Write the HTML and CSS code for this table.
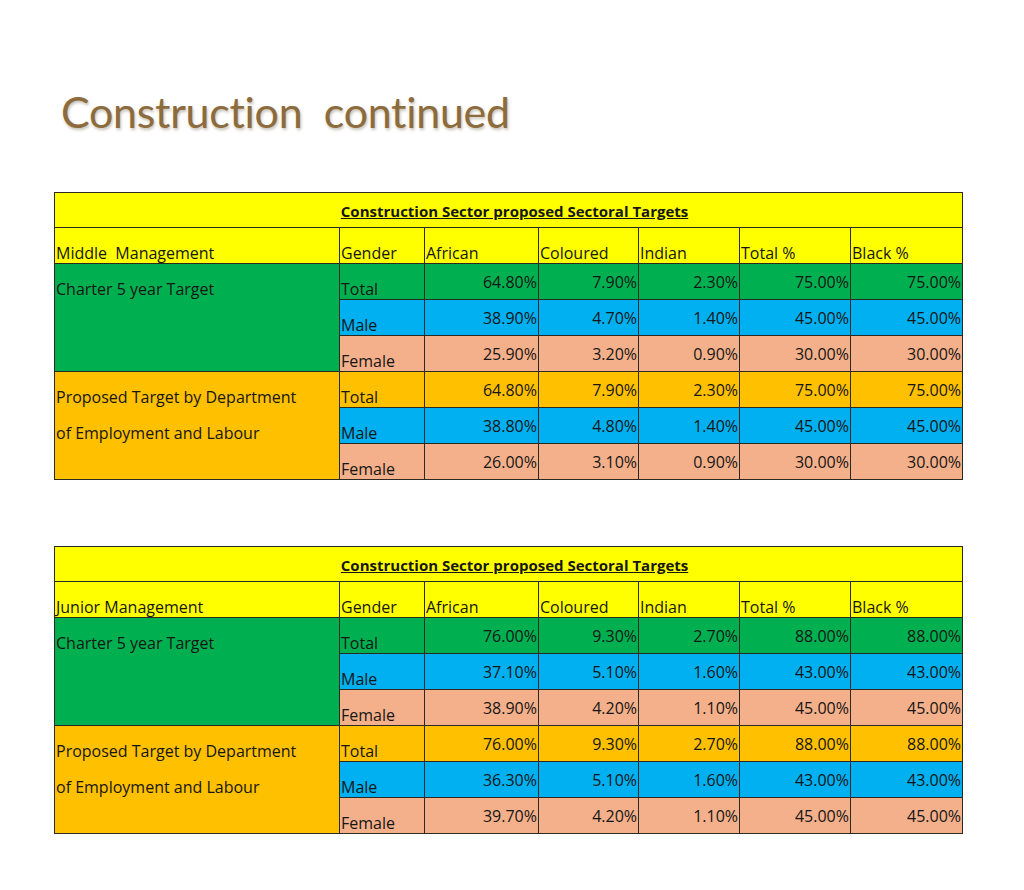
FILE: index.html
```html
<!DOCTYPE html>
<html lang="en">
<head>
<meta charset="utf-8">
<title>Construction continued</title>
<link rel="stylesheet" href="styles.css">
</head>
<body>
<div class="slide">
  <h1 class="title">Construction&nbsp; continued</h1>
  <div class="tables">
    <table class="targets">
      <colgroup>
        <col class="c-label"><col class="c-gender"><col class="c-african"><col class="c-coloured"><col class="c-indian"><col class="c-total"><col class="c-black">
      </colgroup>
      <tr class="r-title"><td colspan="7" class="caption">Construction Sector proposed Sectoral Targets</td></tr>
      <tr class="r-head">
        <td class="txt">Middle&nbsp; Management</td><td class="txt">Gender</td><td class="txt">African</td><td class="txt">Coloured</td><td class="txt">Indian</td><td class="txt">Total %</td><td class="txt">Black %</td>
      </tr>
      <tr class="green">
        <td rowspan="3" class="label">Charter 5 year Target</td>
        <td class="txt">Total</td><td class="num">64.80%</td><td class="num">7.90%</td><td class="num">2.30%</td><td class="num">75.00%</td><td class="num">75.00%</td>
      </tr>
      <tr class="blue"><td class="txt">Male</td><td class="num">38.90%</td><td class="num">4.70%</td><td class="num">1.40%</td><td class="num">45.00%</td><td class="num">45.00%</td></tr>
      <tr class="salmon"><td class="txt">Female</td><td class="num">25.90%</td><td class="num">3.20%</td><td class="num">0.90%</td><td class="num">30.00%</td><td class="num">30.00%</td></tr>
      <tr class="orange">
        <td rowspan="3" class="label">Proposed Target by Department<br>of Employment and Labour</td>
        <td class="txt">Total</td><td class="num">64.80%</td><td class="num">7.90%</td><td class="num">2.30%</td><td class="num">75.00%</td><td class="num">75.00%</td>
      </tr>
      <tr class="blue"><td class="txt">Male</td><td class="num">38.80%</td><td class="num">4.80%</td><td class="num">1.40%</td><td class="num">45.00%</td><td class="num">45.00%</td></tr>
      <tr class="salmon"><td class="txt">Female</td><td class="num">26.00%</td><td class="num">3.10%</td><td class="num">0.90%</td><td class="num">30.00%</td><td class="num">30.00%</td></tr>
    </table>

    <table class="targets">
      <colgroup>
        <col class="c-label"><col class="c-gender"><col class="c-african"><col class="c-coloured"><col class="c-indian"><col class="c-total"><col class="c-black">
      </colgroup>
      <tr class="r-title"><td colspan="7" class="caption">Construction Sector proposed Sectoral Targets</td></tr>
      <tr class="r-head">
        <td class="txt">Junior Management</td><td class="txt">Gender</td><td class="txt">African</td><td class="txt">Coloured</td><td class="txt">Indian</td><td class="txt">Total %</td><td class="txt">Black %</td>
      </tr>
      <tr class="green">
        <td rowspan="3" class="label">Charter 5 year Target</td>
        <td class="txt">Total</td><td class="num">76.00%</td><td class="num">9.30%</td><td class="num">2.70%</td><td class="num">88.00%</td><td class="num">88.00%</td>
      </tr>
      <tr class="blue"><td class="txt">Male</td><td class="num">37.10%</td><td class="num">5.10%</td><td class="num">1.60%</td><td class="num">43.00%</td><td class="num">43.00%</td></tr>
      <tr class="salmon"><td class="txt">Female</td><td class="num">38.90%</td><td class="num">4.20%</td><td class="num">1.10%</td><td class="num">45.00%</td><td class="num">45.00%</td></tr>
      <tr class="orange">
        <td rowspan="3" class="label">Proposed Target by Department<br>of Employment and Labour</td>
        <td class="txt">Total</td><td class="num">76.00%</td><td class="num">9.30%</td><td class="num">2.70%</td><td class="num">88.00%</td><td class="num">88.00%</td>
      </tr>
      <tr class="blue"><td class="txt">Male</td><td class="num">36.30%</td><td class="num">5.10%</td><td class="num">1.60%</td><td class="num">43.00%</td><td class="num">43.00%</td></tr>
      <tr class="salmon"><td class="txt">Female</td><td class="num">39.70%</td><td class="num">4.20%</td><td class="num">1.10%</td><td class="num">45.00%</td><td class="num">45.00%</td></tr>
    </table>
  </div>
</div>
</body>
</html>
```

FILE: styles.css
```css
html, body {
  margin: 0;
  padding: 0;
  background: #ffffff;
}

.slide {
  width: 1024px;
  height: 890px;
  display: flex;
  flex-direction: column;
  padding-top: 84px;
  box-sizing: border-box;
}

.title {
  margin: 0 0 0 61px;
  font-family: "Lato", "DejaVu Sans", sans-serif;
  font-weight: 400;
  font-size: 43px;
  line-height: 56px;
  color: #8c6b3c;
  text-shadow: 1px 2px 3px rgba(90, 70, 40, 0.35);
  letter-spacing: -0.3px;
}

.tables {
  margin: 52px 0 0 54px;
  display: flex;
  flex-direction: column;
  gap: 66px;
}

.targets {
  border-collapse: collapse;
  table-layout: fixed;
  width: 908px;
  font-family: "Open Sans", "Liberation Sans", sans-serif;
  font-size: 16px;
  color: #161616;
}

.c-label { width: 285px; }
.c-gender { width: 85px; }
.c-african { width: 114px; }
.c-coloured { width: 100px; }
.c-indian { width: 101px; }
.c-total { width: 111px; }
.c-black { width: 112px; }

.targets td {
  border: 1px solid #2a2a22;
  padding: 0 1px;
  height: 36px;
  box-sizing: border-box;
  white-space: nowrap;
  overflow: hidden;
}

.targets .r-title td { height: 35px; }

.targets .caption {
  background: #ffff00;
  text-align: center;
  font-weight: 700;
  font-size: 15px;
  text-decoration: underline;
  vertical-align: middle;
  padding: 1px 0 0 12px;
}

.r-head td { background: #ffff00; }

.targets .txt {
  vertical-align: bottom;
  text-align: left;
  line-height: 20px;
  padding: 0 1px 0 1px;
}

.targets .num {
  vertical-align: middle;
  text-align: right;
  padding: 0 1px 0 0;
}

.targets .label {
  vertical-align: top;
  line-height: 36px;
  padding: 7px 0 0 1px;
}

.green td { background: #00b050; }
.blue td { background: #00b0f0; }
.salmon td { background: #f4b08a; }
.orange td { background: #ffc000; }
.green .label { background: #00b050; }
.orange .label { background: #ffc000; }
```
